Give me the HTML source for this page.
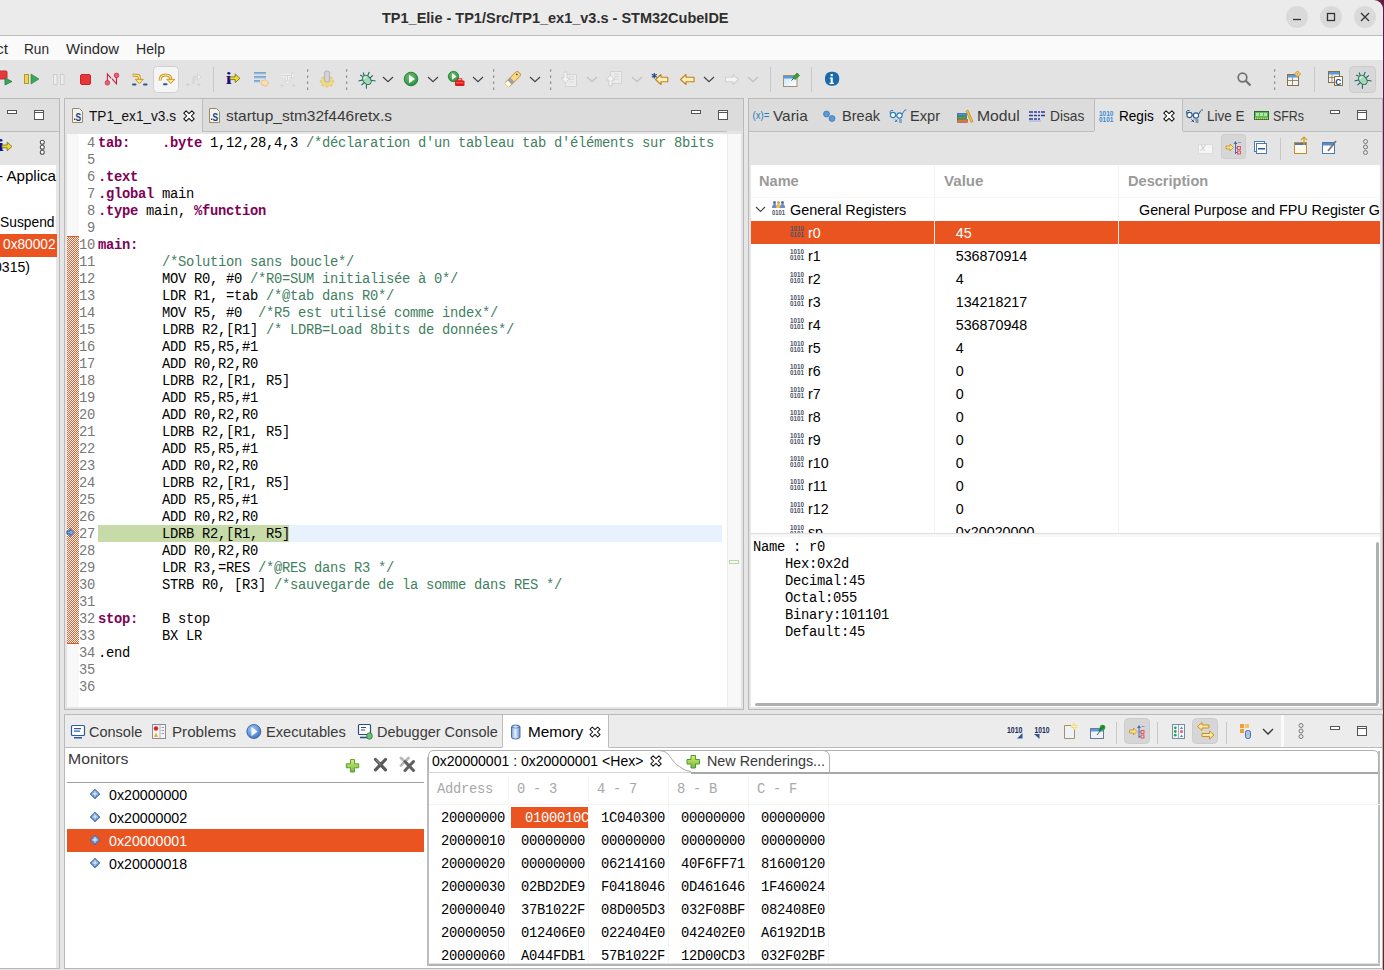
<!DOCTYPE html>
<html><head><meta charset="utf-8"><style>
*{box-sizing:border-box;margin:0;padding:0}
html,body{width:1384px;height:970px;overflow:hidden;background:#e6e6e6;font-family:"Liberation Sans",sans-serif;font-size:14px;color:#000}
.a{position:absolute}
.mono{font-family:"Liberation Mono",monospace}
.t{position:absolute;white-space:pre;line-height:1}
svg{position:absolute;overflow:visible}
</style></head><body>
<div class="a" style="left:0px;top:0px;width:1384px;height:35px;background:#ebebeb;"></div>
<div class="a" style="left:1366px;top:0px;width:18px;height:18px;background:#65203f;"></div>
<div class="a" style="left:1366px;top:0px;width:17px;height:18px;background:#ebebeb;border-top-right-radius:9px"></div>
<div class="a" style="left:0px;top:35px;width:1384px;height:1px;background:#bebebe;"></div>
<div class="t" style="left:382px;top:11px;font-size:14.5px;color:#2f2f2f;font-weight:bold;">TP1_Elie - TP1/Src/TP1_ex1_v3.s - STM32CubeIDE</div>
<div class="a" style="left:1286px;top:6px;width:22px;height:22px;border-radius:11px;background:#dadada"></div>
<div class="a" style="left:1320px;top:6px;width:22px;height:22px;border-radius:11px;background:#dadada"></div>
<div class="a" style="left:1354px;top:6px;width:22px;height:22px;border-radius:11px;background:#dadada"></div>
<svg style="left:0px;top:0px" width="1384" height="40" viewBox="0 0 1384 40"><line x1="1293" y1="19.5" x2="1301" y2="19.5" stroke="#333" stroke-width="1.3"/><rect x="1327.5" y="13.5" width="7" height="7" fill="none" stroke="#333" stroke-width="1.3"/><path d="M1361 13 L1369 21 M1369 13 L1361 21" stroke="#333" stroke-width="1.3"/></svg>
<div class="a" style="left:1383px;top:0px;width:1px;height:970px;background:#65203f;background:linear-gradient(#5e1a42,#6a2424)"></div>
<div class="a" style="left:0px;top:36px;width:1383px;height:24px;background:#fafafa;"></div>
<div class="t" style="left:-4px;top:42px;font-size:14px;color:#2a2a2a;font-weight:normal;transform:scaleX(1.1019);transform-origin:0 0;">ct</div>
<div class="t" style="left:24px;top:42px;font-size:14px;color:#2a2a2a;font-weight:normal;transform:scaleX(0.9738);transform-origin:0 0;">Run</div>
<div class="t" style="left:66px;top:42px;font-size:14px;color:#2a2a2a;font-weight:normal;transform:scaleX(1.0647);transform-origin:0 0;">Window</div>
<div class="t" style="left:136px;top:42px;font-size:14px;color:#2a2a2a;font-weight:normal;transform:scaleX(1.0076);transform-origin:0 0;">Help</div>
<div class="a" style="left:0px;top:60px;width:1383px;height:38px;background:#e3e3e3;"></div>
<svg style="left:0px;top:0px" width="1384" height="100" viewBox="0 0 1384 100"><rect x="153.5" y="66.5" width="25" height="26" rx="4" fill="#f5f5f5" stroke="#cfcfcf"/><rect x="1349.5" y="66.5" width="26" height="26" rx="4" fill="#d8d8d8" stroke="#cccccc"/><rect x="-3" y="71" width="10" height="8" rx="1" fill="#e8383d" stroke="#c02a30"/><path d="M5 78 L12 81.5 L5 85Z" fill="#3aa55a" stroke="#208040" stroke-width=".8"/><rect x="24.5" y="74.5" width="4" height="9" fill="#f0d060" stroke="#b89a20"/><path d="M31 74 L39 79 L31 84Z" fill="#3aa85a" stroke="#2a8040" stroke-width=".6"/><rect x="53.5" y="74.5" width="3.5" height="10" fill="#eee" stroke="#cfcfcf"/><rect x="60.5" y="74.5" width="3.5" height="10" fill="#eee" stroke="#cfcfcf"/><rect x="80.5" y="74.5" width="10" height="10" rx="1.5" fill="#e8363c" stroke="#c0282d"/><path d="M107.4 82 L107.4 74 L111.2 78.3 M112.3 78.6 L112.6 79.4 L116.5 83.8 L116.5 76" fill="none" stroke="#c82040" stroke-width="1.1"/><circle cx="107.4" cy="82.8" r="2.3" fill="#f06070" stroke="#c02040" stroke-width=".7"/><circle cx="116.5" cy="75.4" r="2.3" fill="#f06070" stroke="#c02040" stroke-width=".7"/><path d="M132.5 75.3 L137.5 75.3 Q139.3 75.3 139.3 77.5 L139.3 80" fill="none" stroke="#c8961e" stroke-width="3"/><path d="M132.5 75.3 L137.5 75.3 Q139.3 75.3 139.3 77.5 L139.3 80" fill="none" stroke="#fff0a8" stroke-width="1.1"/><path d="M135.3 79.3 L143.3 79.3 L139.3 83.5Z" fill="#fce890" stroke="#c8961e" stroke-width="1" stroke-linejoin="round"/><rect x="132" y="83.6" width="4.5" height="2" rx="1" fill="#2a5a8a"/><rect x="143" y="83.6" width="4.5" height="2" rx="1" fill="#2a5a8a"/><path d="M160 80.5 Q160 75 165.5 75 Q170.8 75 170.8 79.5" fill="none" stroke="#c8961e" stroke-width="3"/><path d="M160 80.5 Q160 75 165.5 75 Q170.8 75 170.8 79.5" fill="none" stroke="#fff0a8" stroke-width="1.1"/><path d="M166.8 79.3 L174.8 79.3 L170.8 83.5Z" fill="#fce890" stroke="#c8961e" stroke-width="1" stroke-linejoin="round"/><rect x="163" y="83.3" width="4.5" height="2" rx="1" fill="#2a5a8a"/><path d="M193.5 84 L193.5 79 Q193.5 77 195.5 77 L198 77" fill="none" stroke="#d8d8d8" stroke-width="2.4"/><path d="M197.5 73.5 L201 77 L197.5 80.5Z" fill="#f0f0f0" stroke="#d0d0d0" stroke-width=".8"/><rect x="186" y="83.8" width="3.5" height="1.6" rx=".8" fill="#cfcfcf"/><rect x="197" y="83.8" width="3.5" height="1.6" rx=".8" fill="#cfcfcf"/><rect x="213" y="67" width="1" height="25" fill="#c8c8c8"/><text x="225.8" y="84.2" font-family="Liberation Serif" font-weight="bold" font-size="16" textLength="6" lengthAdjust="spacingAndGlyphs" fill="#10108a">i</text><path d="M230.0 76.89999999999999 L235.2 76.89999999999999 L235.2 73.89999999999999 L239.9 78.3 L235.2 82.6 L235.2 79.6 L230.0 79.6Z" fill="#e8e030" stroke="#8a6a20" stroke-width=".9"/><defs><linearGradient id="gl" x1="0" y1="0" x2="0" y2="1"><stop offset="0" stop-color="#6a9ac8"/><stop offset="1" stop-color="#b0cce8"/></linearGradient></defs><rect x="254" y="72" width="12" height="2.6" fill="url(#gl)"/><rect x="254" y="76" width="12" height="2.6" fill="url(#gl)"/><rect x="254" y="80" width="6" height="2.6" fill="url(#gl)"/><path d="M261 81.5 Q262 79.5 264 80.5 L265.5 79.5 L268.5 83 L266 86.5 L264.5 85.5 Q262 86 261 83Z" fill="#f8e0b0" stroke="#e0b070" stroke-width=".7"/><path d="M281 75.5 L292 75.5 M287.5 75.5 L287.5 82" stroke="#f4f4f4" stroke-width="2.6"/><path d="M281 75.5 L292 75.5 M287.5 75.5 L287.5 82" stroke="#d4d4d4" stroke-width="1" stroke-dasharray="0"/><path d="M291.5 72.5 L295 75.5 L291.5 78.5Z" fill="#f4f4f4" stroke="#d0d0d0" stroke-width=".8"/><path d="M284.5 81 L287.5 84.5 L290.5 81Z" fill="#f4f4f4" stroke="#d0d0d0" stroke-width=".8"/><rect x="280" y="84.8" width="3.5" height="1.5" rx=".7" fill="#d0d0d0"/><rect x="292" y="84.8" width="3.5" height="1.5" rx=".7" fill="#d0d0d0"/><rect x="307" y="69.2" width="1.2" height="2.6" fill="#9a9080"/><rect x="307" y="75.4" width="1.2" height="2.6" fill="#9a9080"/><rect x="307" y="81.4" width="1.2" height="2.6" fill="#9a9080"/><rect x="307" y="87.4" width="1.2" height="2.6" fill="#9a9080"/><circle cx="332.50" cy="81.50" r="1.8" fill="#e8cc70"/><circle cx="330.89" cy="84.68" r="1.8" fill="#e8cc70"/><circle cx="327.00" cy="86.00" r="1.8" fill="#e8cc70"/><circle cx="323.11" cy="84.68" r="1.8" fill="#e8cc70"/><circle cx="321.50" cy="81.50" r="1.8" fill="#e8cc70"/><circle cx="323.11" cy="78.32" r="1.8" fill="#e8cc70"/><circle cx="327.00" cy="77.00" r="1.8" fill="#e8cc70"/><circle cx="330.89" cy="78.32" r="1.8" fill="#e8cc70"/><ellipse cx="327" cy="81.5" rx="5.5" ry="4.5" fill="#f0d888"/><rect x="324.5" y="71" width="5" height="11" rx="2" fill="#d4d4dc" stroke="#a0a0a8" stroke-width=".7"/><rect x="346" y="69.2" width="1.2" height="2.6" fill="#9a9080"/><rect x="346" y="75.4" width="1.2" height="2.6" fill="#9a9080"/><rect x="346" y="81.4" width="1.2" height="2.6" fill="#9a9080"/><rect x="346" y="87.4" width="1.2" height="2.6" fill="#9a9080"/><g transform="translate(366.5 79.5) rotate(-40)"><path d="M-3 -2 L-7 -4 M3 -2 L7 -4 M-3.5 1 L-7.5 1 M3.5 1 L7.5 1 M-3 3.5 L-6 7 M3 3.5 L6 7 M-1 -5 L-2 -7.5 M1 -5 L2 -7.5" stroke="#1e6a6a" stroke-width="1.1"/><ellipse cx="0" cy="0.5" rx="3.6" ry="5.2" fill="#a8d8b0" stroke="#2a6a60" stroke-width="1"/><path d="M-1.5 -2 Q0 -3 1.5 -2" stroke="#e8f8e8" stroke-width="1" fill="none"/></g><path d="M383 77 L388 81.7 L393 77" fill="none" stroke="#444" stroke-width="1.2"/><defs><radialGradient id="gg" cx=".45" cy=".4" r=".65"><stop offset="0" stop-color="#78c878"/><stop offset="1" stop-color="#1e8a3a"/></radialGradient></defs><circle cx="411" cy="79" r="6.8" fill="url(#gg)" stroke="#1a7030" stroke-width=".8"/><path d="M409 74.8 L415 79 L409 83.2Z" fill="#fff"/><path d="M428 77 L433 81.7 L438 77" fill="none" stroke="#444" stroke-width="1.2"/><circle cx="453.5" cy="76.5" r="5.2" fill="url(#gg)" stroke="#1a7030" stroke-width=".7"/><path d="M452 73.3 L456.5 76.5 L452 79.7Z" fill="#fff"/><rect x="455" y="80.5" width="9.5" height="5.5" rx="1" fill="#e01818"/><rect x="457.8" y="78.8" width="4" height="2" fill="none" stroke="#e01818" stroke-width=".9"/><path d="M456 82.8 L463.5 82.8" stroke="#ff9090" stroke-width=".7"/><path d="M473 77 L478 81.7 L483 77" fill="none" stroke="#444" stroke-width="1.2"/><rect x="493" y="69.2" width="1.2" height="2.6" fill="#9a9080"/><rect x="493" y="75.4" width="1.2" height="2.6" fill="#9a9080"/><rect x="493" y="81.4" width="1.2" height="2.6" fill="#9a9080"/><rect x="493" y="87.4" width="1.2" height="2.6" fill="#9a9080"/><g transform="translate(513 79) rotate(-45)"><rect x="-9" y="-3" width="18" height="6" rx="2.5" fill="#f8d880" stroke="#c08a30" stroke-width=".9"/><rect x="-5" y="-3" width="4" height="6" fill="#a0a0a8"/><path d="M-9 -2.5 L-5 -2.5 L-5 2.5 L-9 2.5Z" fill="#fffbe8"/><circle cx="6" cy="-0.5" r=".9" fill="#3a5a9a"/></g><path d="M530 77 L535 81.7 L540 77" fill="none" stroke="#444" stroke-width="1.2"/><rect x="550" y="69.2" width="1.2" height="2.6" fill="#9a9080"/><rect x="550" y="75.4" width="1.2" height="2.6" fill="#9a9080"/><rect x="550" y="81.4" width="1.2" height="2.6" fill="#9a9080"/><rect x="550" y="87.4" width="1.2" height="2.6" fill="#9a9080"/><rect x="565.5" y="74.5" width="11" height="12" fill="#ececec" stroke="#d4d4d4"/><path d="M569 77 L574 77 M569 79.5 L574 79.5 M569 82 L574 82" stroke="#d8d8d8"/><path d="M564 72 L567 72 L567 78 L570 78 L565.5 83 L561 78 L564 78Z" fill="#f4f4f4" stroke="#d0d0d0"/><path d="M587 77 L592 81.7 L597 77" fill="none" stroke="#c0c0c0" stroke-width="1.2"/><rect x="610.5" y="71.5" width="11" height="12" fill="#ececec" stroke="#d4d4d4"/><path d="M614 74 L619 74 M614 76.5 L619 76.5 M614 79 L619 79" stroke="#d8d8d8"/><path d="M609 86 L612 86 L612 80 L615 80 L610.5 75 L606 80 L609 80Z" fill="#f4f4f4" stroke="#d0d0d0"/><path d="M632 77 L637 81.7 L642 77" fill="none" stroke="#c0c0c0" stroke-width="1.2"/><path d="M654.3 73 L654.3 78.5 M651.8 74.3 L656.8 77.2 M656.8 74.3 L651.8 77.2" stroke="#2a4a8a" stroke-width="1.2"/><path d="M655.5 79.5 L661 74.5 L661 77.3 L667.8 77.3 L667.8 81.7 L661 81.7 L661 84.5Z" fill="#fff0b8" stroke="#c08020" stroke-width="1.1" stroke-linejoin="round"/><path d="M680.5 79.5 L686 74.5 L686 77.3 L694 77.3 L694 81.7 L686 81.7 L686 84.5Z" fill="#fff0b8" stroke="#c08020" stroke-width="1.1" stroke-linejoin="round"/><path d="M704 77 L709 81.7 L714 77" fill="none" stroke="#444" stroke-width="1.2"/><path d="M738.5 79.5 L733 74.5 L733 77.3 L725.5 77.3 L725.5 81.7 L733 81.7 L733 84.5Z" fill="#f4f4f4" stroke="#d0d0d0" stroke-width="1.1" stroke-linejoin="round"/><path d="M748 77 L753 81.7 L758 77" fill="none" stroke="#c0c0c0" stroke-width="1.2"/><rect x="770" y="67" width="1" height="25" fill="#c8c8c8"/><defs><linearGradient id="gw" x1="0" y1="0" x2="1" y2="1"><stop offset="0" stop-color="#c8e4f8"/><stop offset="1" stop-color="#ffffff"/></linearGradient></defs><rect x="783.5" y="75.5" width="13.5" height="11" fill="url(#gw)" stroke="#a09070"/><rect x="784" y="76" width="12.5" height="2.5" fill="#5a9ad8"/><path d="M791.5 80.5 L794 78" stroke="#333" stroke-width=".9"/><path d="M793 77.5 L797 73 L799.5 75.5 L795 79.5Z" fill="#40a040" stroke="#208020" stroke-width=".8"/><rect x="811" y="67" width="1" height="25" fill="#c8c8c8"/><rect x="825" y="71.8" width="14.2" height="14" rx="6" fill="#1a6aaa"/><rect x="830.6" y="74" width="2.2" height="2.2" fill="#fff"/><path d="M829.8 77.5 L832.8 77.5 L832.8 82.8 L834 82.8 L834 84 L829.5 84 L829.5 82.8 L830.7 82.8 L830.7 78.7 L829.8 78.7Z" fill="#fff"/><circle cx="1242.5" cy="77.5" r="4.3" fill="none" stroke="#707070" stroke-width="1.7"/><path d="M1245.5 80.5 L1250.5 85.5" stroke="#707070" stroke-width="2.2"/><rect x="1274" y="69.2" width="1.2" height="2.6" fill="#9a9080"/><rect x="1274" y="75.4" width="1.2" height="2.6" fill="#9a9080"/><rect x="1274" y="81.4" width="1.2" height="2.6" fill="#9a9080"/><rect x="1274" y="87.4" width="1.2" height="2.6" fill="#9a9080"/><rect x="1287.5" y="74.5" width="11" height="11" fill="#eef4fc" stroke="#8a7040"/><rect x="1288" y="75" width="10" height="2.5" fill="#5a9ae0"/><path d="M1288 80.5 L1298 80.5 M1292.5 77.5 L1292.5 85" stroke="#8a7040" stroke-width=".8"/><path d="M1297.5 71 L1300.5 74 L1297.5 77 L1294.5 74Z" fill="#fce8a0" stroke="#c09030" stroke-width="1"/><path d="M1297.5 72.5 L1297.5 75.5 M1296 74 L1299 74" stroke="#e0a020" stroke-width=".8"/><rect x="1314" y="67" width="1" height="25" fill="#c8c8c8"/><rect x="1328.5" y="71.5" width="11" height="11" fill="#eef4fc" stroke="#8a7040"/><rect x="1329" y="72" width="10" height="2.5" fill="#5a9ae0"/><path d="M1329 77.5 L1334 77.5 M1332 74.5 L1332 82" stroke="#8a7040" stroke-width=".8"/><rect x="1334.5" y="76.5" width="8" height="9" fill="#fff" stroke="#8a7040"/><text x="1335.3" y="84.5" font-size="8.5" font-weight="bold" textLength="6" lengthAdjust="spacingAndGlyphs" fill="#1a3a7a">C</text><g transform="translate(1362.5 79.5) rotate(-40)"><path d="M-3 -2 L-7 -4 M3 -2 L7 -4 M-3.5 1 L-7.5 1 M3.5 1 L7.5 1 M-3 3.5 L-6 7 M3 3.5 L6 7 M-1 -5 L-2 -7.5 M1 -5 L2 -7.5" stroke="#1e6a6a" stroke-width="1.1"/><ellipse cx="0" cy="0.5" rx="3.6" ry="5.2" fill="#a8d8b0" stroke="#2a6a60" stroke-width="1"/><path d="M-1.5 -2 Q0 -3 1.5 -2" stroke="#e8f8e8" stroke-width="1" fill="none"/></g></svg>
<div class="a" style="left:0px;top:98px;width:1383px;height:872px;background:#e6e6e6;"></div>
<div class="a" style="left:0px;top:98px;width:60px;height:1px;background:#b9b9b9;"></div>
<div class="a" style="left:59px;top:98px;width:1px;height:871px;background:#b9b9b9;"></div>
<div class="a" style="left:0px;top:99px;width:59px;height:32px;background:#dfdfdf;"></div>
<div class="a" style="left:0px;top:131px;width:59px;height:1px;background:#bdbdbd;"></div>
<div class="a" style="left:0px;top:132px;width:59px;height:33px;background:#e4e4e4;"></div>
<div class="a" style="left:0px;top:165px;width:56px;height:804px;background:#ffffff;"></div>
<div class="a" style="left:0px;top:968px;width:60px;height:1px;background:#b9b9b9;"></div>
<svg style="left:0px;top:0px" width="60" height="200" viewBox="0 0 60 200"><rect x="7.5" y="110.5" width="9" height="3" fill="#fff" stroke="#555" stroke-width="1"/><rect x="34.5" y="110.5" width="9" height="9" fill="#fff" stroke="#555" stroke-width="1"/><rect x="35" y="112" width="8" height="1" fill="#555"/><text x="-2.2" y="151.2" font-family="Liberation Serif" font-weight="bold" font-size="16" textLength="6" lengthAdjust="spacingAndGlyphs" fill="#10108a">i</text><path d="M2.0 145.1 L7.199999999999999 145.1 L7.199999999999999 142.1 L11.9 146.5 L7.199999999999999 150.8 L7.199999999999999 147.8 L2.0 147.8Z" fill="#e8e030" stroke="#8a6a20" stroke-width=".9"/><circle cx="42.3" cy="142.3" r="2" fill="#fff" stroke="#555" stroke-width="1.1"/><circle cx="42.3" cy="147.3" r="2" fill="#fff" stroke="#555" stroke-width="1.1"/><circle cx="42.3" cy="152.3" r="2" fill="#fff" stroke="#555" stroke-width="1.1"/></svg>
<div class="t" style="left:-2px;top:169.43px;font-size:14.5px;color:#000;font-weight:normal;transform:scaleX(1.0430);transform-origin:0 0;">- Applica</div>
<div class="t" style="left:0px;top:214.53px;font-size:14.5px;color:#000;font-weight:normal;transform:scaleX(0.9522);transform-origin:0 0;">Suspend</div>
<div class="a" style="left:0px;top:234px;width:57px;height:23px;background:#e95420;"></div>
<div class="t" style="left:3px;top:237.43px;font-size:14.5px;color:#fff;font-weight:normal;transform:scaleX(0.9456);transform-origin:0 0;">0x80002</div>
<div class="t" style="left:-6.5px;top:260.33px;font-size:14.5px;color:#000;font-weight:normal;transform:scaleX(0.9709);transform-origin:0 0;">0315)</div>
<div class="a" style="left:64px;top:98px;width:680px;height:1px;background:#b9b9b9;"></div>
<div class="a" style="left:64px;top:98px;width:1px;height:612px;background:#b9b9b9;"></div>
<div class="a" style="left:743px;top:98px;width:1px;height:612px;background:#b9b9b9;"></div>
<div class="a" style="left:64px;top:709px;width:680px;height:1px;background:#b9b9b9;"></div>
<div class="a" style="left:65px;top:99px;width:678px;height:32px;background:#dcdcdc;"></div>
<div class="a" style="left:65px;top:99px;width:137px;height:35px;background:#e4e4e4;"></div>
<div class="a" style="left:202px;top:99px;width:1px;height:32px;background:#bdbdbd;"></div>
<div class="a" style="left:202px;top:131px;width:541px;height:1px;background:#bdbdbd;"></div>
<div class="a" style="left:65px;top:131px;width:2px;height:578px;background:#e4e4e4;"></div>
<div class="a" style="left:727px;top:131px;width:16px;height:578px;background:#e4e4e4;"></div>
<div class="a" style="left:65px;top:707px;width:678px;height:2px;background:#e4e4e4;"></div>
<svg style="left:0px;top:0px" width="760" height="140" viewBox="0 0 760 140"><path d="M72.5 108.5 L79.5 108.5 L82.5 111.5 L82.5 122.5 L72.5 122.5Z" fill="#eef2fa" stroke="#a08a50" stroke-width="1"/><rect x="74" y="118.5" width="1.3" height="1.5" fill="#1e3f70"/><text x="75.5" y="120.5" font-size="10.5" font-weight="bold" textLength="5.6" lengthAdjust="spacingAndGlyphs" fill="#1e3f70">S</text><path d="M209.5 108.5 L216.5 108.5 L219.5 111.5 L219.5 122.5 L209.5 122.5Z" fill="#eef2fa" stroke="#a08a50" stroke-width="1"/><rect x="211" y="118.5" width="1.3" height="1.5" fill="#1e3f70"/><text x="212.5" y="120.5" font-size="10.5" font-weight="bold" textLength="5.6" lengthAdjust="spacingAndGlyphs" fill="#1e3f70">S</text><path d="M183.80 113.10 L186.10 110.80 L189.00 113.70 L191.90 110.80 L194.20 113.10 L191.30 116.00 L194.20 118.90 L191.90 121.20 L189.00 118.30 L186.10 121.20 L183.80 118.90 L186.70 116.00Z" fill="#fff" stroke="#111" stroke-width="1.05" stroke-linejoin="round"/><rect x="691.5" y="110.5" width="9" height="3" fill="#fff" stroke="#555" stroke-width="1"/><rect x="718.5" y="110.5" width="9" height="9" fill="#fff" stroke="#555" stroke-width="1"/><rect x="719" y="112" width="8" height="1" fill="#555"/></svg>
<div class="t" style="left:89px;top:108.73px;font-size:14.5px;color:#101010;font-weight:normal;transform:scaleX(0.9386);transform-origin:0 0;">TP1_ex1_v3.s</div>
<div class="t" style="left:226px;top:108.73px;font-size:14.5px;color:#3a3a3a;font-weight:normal;transform:scaleX(1.0672);transform-origin:0 0;">startup_stm32f446retx.s</div>
<div class="a" style="left:67px;top:134px;width:660px;height:573px;background:#ffffff;"></div>
<div class="a" style="left:67px;top:134px;width:12px;height:573px;background:#f8f8f8;"></div>
<div class="a" style="left:727px;top:134px;width:14px;height:573px;background:#f8f8f8;"></div>
<div class="a" style="left:727px;top:134px;width:1px;height:573px;background:#ececec;"></div>
<div class="a" style="left:67px;top:236px;width:12px;height:408px;background:repeating-conic-gradient(#ec5a28 0 25%,#ffffff 0 50%) 1px 0/2px 2px"></div>
<div class="a" style="left:67px;top:236px;width:12px;height:1px;background:#e95420;"></div>
<div class="a" style="left:67px;top:643px;width:12px;height:1px;background:#e95420;"></div>
<div class="a" style="left:98px;top:525px;width:624px;height:17px;background:#e8f2fe;"></div>
<div class="a" style="left:98px;top:525px;width:191px;height:17px;background:#c7dba8;"></div>
<svg style="left:0px;top:0px" width="100" height="560" viewBox="0 0 100 560"><path d="M67 531 L70 531 L70 528.5 L74 532.5 L70 536.5 L70 534 L67 534Z" fill="#7aaad8" stroke="#1a5aa0" stroke-width="1"/></svg>
<div class="a" style="left:729px;top:560px;width:10px;height:4px;background:transparent;border:1px solid #b8d8a0"></div>
<div class="t mono" style="left:79px;top:134.8px;width:16px;height:17px;line-height:17px;font-size:13.8px;letter-spacing:-0.28px;color:#787878;text-align:right">4</div>
<div class="t mono" style="left:98px;top:134.6px;height:17px;line-height:17px;font-size:13.8px;letter-spacing:-0.28px;color:#000"><span style="color:#7f0055;font-weight:bold">tab:</span>    <span style="color:#7f0055;font-weight:bold">.byte</span> 1,12,28,4,3 <span style="color:#3f7f5f;font-weight:normal">/*déclaration d'un tableau tab d'éléments sur 8bits</span></div>
<div class="t mono" style="left:79px;top:151.8px;width:16px;height:17px;line-height:17px;font-size:13.8px;letter-spacing:-0.28px;color:#787878;text-align:right">5</div>
<div class="t mono" style="left:79px;top:168.8px;width:16px;height:17px;line-height:17px;font-size:13.8px;letter-spacing:-0.28px;color:#787878;text-align:right">6</div>
<div class="t mono" style="left:98px;top:168.6px;height:17px;line-height:17px;font-size:13.8px;letter-spacing:-0.28px;color:#000"><span style="color:#7f0055;font-weight:bold">.text</span></div>
<div class="t mono" style="left:79px;top:185.8px;width:16px;height:17px;line-height:17px;font-size:13.8px;letter-spacing:-0.28px;color:#787878;text-align:right">7</div>
<div class="t mono" style="left:98px;top:185.6px;height:17px;line-height:17px;font-size:13.8px;letter-spacing:-0.28px;color:#000"><span style="color:#7f0055;font-weight:bold">.global</span> main</div>
<div class="t mono" style="left:79px;top:202.8px;width:16px;height:17px;line-height:17px;font-size:13.8px;letter-spacing:-0.28px;color:#787878;text-align:right">8</div>
<div class="t mono" style="left:98px;top:202.6px;height:17px;line-height:17px;font-size:13.8px;letter-spacing:-0.28px;color:#000"><span style="color:#7f0055;font-weight:bold">.type</span> main, <span style="color:#7f0055;font-weight:bold">%function</span></div>
<div class="t mono" style="left:79px;top:219.8px;width:16px;height:17px;line-height:17px;font-size:13.8px;letter-spacing:-0.28px;color:#787878;text-align:right">9</div>
<div class="t mono" style="left:79px;top:236.8px;width:16px;height:17px;line-height:17px;font-size:13.8px;letter-spacing:-0.28px;color:#787878;text-align:right">10</div>
<div class="t mono" style="left:98px;top:236.6px;height:17px;line-height:17px;font-size:13.8px;letter-spacing:-0.28px;color:#000"><span style="color:#7f0055;font-weight:bold">main:</span></div>
<div class="t mono" style="left:79px;top:253.8px;width:16px;height:17px;line-height:17px;font-size:13.8px;letter-spacing:-0.28px;color:#787878;text-align:right">11</div>
<div class="t mono" style="left:98px;top:253.6px;height:17px;line-height:17px;font-size:13.8px;letter-spacing:-0.28px;color:#000">        <span style="color:#3f7f5f;font-weight:normal">/*Solution sans boucle*/</span></div>
<div class="t mono" style="left:79px;top:270.8px;width:16px;height:17px;line-height:17px;font-size:13.8px;letter-spacing:-0.28px;color:#787878;text-align:right">12</div>
<div class="t mono" style="left:98px;top:270.6px;height:17px;line-height:17px;font-size:13.8px;letter-spacing:-0.28px;color:#000">        MOV R0, #0 <span style="color:#3f7f5f;font-weight:normal">/*R0=SUM initialisée à 0*/</span></div>
<div class="t mono" style="left:79px;top:287.8px;width:16px;height:17px;line-height:17px;font-size:13.8px;letter-spacing:-0.28px;color:#787878;text-align:right">13</div>
<div class="t mono" style="left:98px;top:287.6px;height:17px;line-height:17px;font-size:13.8px;letter-spacing:-0.28px;color:#000">        LDR R1, =tab <span style="color:#3f7f5f;font-weight:normal">/*@tab dans R0*/</span></div>
<div class="t mono" style="left:79px;top:304.8px;width:16px;height:17px;line-height:17px;font-size:13.8px;letter-spacing:-0.28px;color:#787878;text-align:right">14</div>
<div class="t mono" style="left:98px;top:304.6px;height:17px;line-height:17px;font-size:13.8px;letter-spacing:-0.28px;color:#000">        MOV R5, #0  <span style="color:#3f7f5f;font-weight:normal">/*R5 est utilisé comme index*/</span></div>
<div class="t mono" style="left:79px;top:321.8px;width:16px;height:17px;line-height:17px;font-size:13.8px;letter-spacing:-0.28px;color:#787878;text-align:right">15</div>
<div class="t mono" style="left:98px;top:321.6px;height:17px;line-height:17px;font-size:13.8px;letter-spacing:-0.28px;color:#000">        LDRB R2,[R1] <span style="color:#3f7f5f;font-weight:normal">/* LDRB=Load 8bits de données*/</span></div>
<div class="t mono" style="left:79px;top:338.8px;width:16px;height:17px;line-height:17px;font-size:13.8px;letter-spacing:-0.28px;color:#787878;text-align:right">16</div>
<div class="t mono" style="left:98px;top:338.6px;height:17px;line-height:17px;font-size:13.8px;letter-spacing:-0.28px;color:#000">        ADD R5,R5,#1</div>
<div class="t mono" style="left:79px;top:355.8px;width:16px;height:17px;line-height:17px;font-size:13.8px;letter-spacing:-0.28px;color:#787878;text-align:right">17</div>
<div class="t mono" style="left:98px;top:355.6px;height:17px;line-height:17px;font-size:13.8px;letter-spacing:-0.28px;color:#000">        ADD R0,R2,R0</div>
<div class="t mono" style="left:79px;top:372.8px;width:16px;height:17px;line-height:17px;font-size:13.8px;letter-spacing:-0.28px;color:#787878;text-align:right">18</div>
<div class="t mono" style="left:98px;top:372.6px;height:17px;line-height:17px;font-size:13.8px;letter-spacing:-0.28px;color:#000">        LDRB R2,[R1, R5]</div>
<div class="t mono" style="left:79px;top:389.8px;width:16px;height:17px;line-height:17px;font-size:13.8px;letter-spacing:-0.28px;color:#787878;text-align:right">19</div>
<div class="t mono" style="left:98px;top:389.6px;height:17px;line-height:17px;font-size:13.8px;letter-spacing:-0.28px;color:#000">        ADD R5,R5,#1</div>
<div class="t mono" style="left:79px;top:406.8px;width:16px;height:17px;line-height:17px;font-size:13.8px;letter-spacing:-0.28px;color:#787878;text-align:right">20</div>
<div class="t mono" style="left:98px;top:406.6px;height:17px;line-height:17px;font-size:13.8px;letter-spacing:-0.28px;color:#000">        ADD R0,R2,R0</div>
<div class="t mono" style="left:79px;top:423.8px;width:16px;height:17px;line-height:17px;font-size:13.8px;letter-spacing:-0.28px;color:#787878;text-align:right">21</div>
<div class="t mono" style="left:98px;top:423.6px;height:17px;line-height:17px;font-size:13.8px;letter-spacing:-0.28px;color:#000">        LDRB R2,[R1, R5]</div>
<div class="t mono" style="left:79px;top:440.8px;width:16px;height:17px;line-height:17px;font-size:13.8px;letter-spacing:-0.28px;color:#787878;text-align:right">22</div>
<div class="t mono" style="left:98px;top:440.6px;height:17px;line-height:17px;font-size:13.8px;letter-spacing:-0.28px;color:#000">        ADD R5,R5,#1</div>
<div class="t mono" style="left:79px;top:457.8px;width:16px;height:17px;line-height:17px;font-size:13.8px;letter-spacing:-0.28px;color:#787878;text-align:right">23</div>
<div class="t mono" style="left:98px;top:457.6px;height:17px;line-height:17px;font-size:13.8px;letter-spacing:-0.28px;color:#000">        ADD R0,R2,R0</div>
<div class="t mono" style="left:79px;top:474.8px;width:16px;height:17px;line-height:17px;font-size:13.8px;letter-spacing:-0.28px;color:#787878;text-align:right">24</div>
<div class="t mono" style="left:98px;top:474.6px;height:17px;line-height:17px;font-size:13.8px;letter-spacing:-0.28px;color:#000">        LDRB R2,[R1, R5]</div>
<div class="t mono" style="left:79px;top:491.8px;width:16px;height:17px;line-height:17px;font-size:13.8px;letter-spacing:-0.28px;color:#787878;text-align:right">25</div>
<div class="t mono" style="left:98px;top:491.6px;height:17px;line-height:17px;font-size:13.8px;letter-spacing:-0.28px;color:#000">        ADD R5,R5,#1</div>
<div class="t mono" style="left:79px;top:508.8px;width:16px;height:17px;line-height:17px;font-size:13.8px;letter-spacing:-0.28px;color:#787878;text-align:right">26</div>
<div class="t mono" style="left:98px;top:508.6px;height:17px;line-height:17px;font-size:13.8px;letter-spacing:-0.28px;color:#000">        ADD R0,R2,R0</div>
<div class="t mono" style="left:79px;top:525.8px;width:16px;height:17px;line-height:17px;font-size:13.8px;letter-spacing:-0.28px;color:#787878;text-align:right">27</div>
<div class="t mono" style="left:98px;top:525.6px;height:17px;line-height:17px;font-size:13.8px;letter-spacing:-0.28px;color:#000">        LDRB R2,[R1, R5]</div>
<div class="t mono" style="left:79px;top:542.8px;width:16px;height:17px;line-height:17px;font-size:13.8px;letter-spacing:-0.28px;color:#787878;text-align:right">28</div>
<div class="t mono" style="left:98px;top:542.6px;height:17px;line-height:17px;font-size:13.8px;letter-spacing:-0.28px;color:#000">        ADD R0,R2,R0</div>
<div class="t mono" style="left:79px;top:559.8px;width:16px;height:17px;line-height:17px;font-size:13.8px;letter-spacing:-0.28px;color:#787878;text-align:right">29</div>
<div class="t mono" style="left:98px;top:559.6px;height:17px;line-height:17px;font-size:13.8px;letter-spacing:-0.28px;color:#000">        LDR R3,=RES <span style="color:#3f7f5f;font-weight:normal">/*@RES dans R3 */</span></div>
<div class="t mono" style="left:79px;top:576.8px;width:16px;height:17px;line-height:17px;font-size:13.8px;letter-spacing:-0.28px;color:#787878;text-align:right">30</div>
<div class="t mono" style="left:98px;top:576.6px;height:17px;line-height:17px;font-size:13.8px;letter-spacing:-0.28px;color:#000">        STRB R0, [R3] <span style="color:#3f7f5f;font-weight:normal">/*sauvegarde de la somme dans RES */</span></div>
<div class="t mono" style="left:79px;top:593.8px;width:16px;height:17px;line-height:17px;font-size:13.8px;letter-spacing:-0.28px;color:#787878;text-align:right">31</div>
<div class="t mono" style="left:79px;top:610.8px;width:16px;height:17px;line-height:17px;font-size:13.8px;letter-spacing:-0.28px;color:#787878;text-align:right">32</div>
<div class="t mono" style="left:98px;top:610.6px;height:17px;line-height:17px;font-size:13.8px;letter-spacing:-0.28px;color:#000"><span style="color:#7f0055;font-weight:bold">stop:</span>   B stop</div>
<div class="t mono" style="left:79px;top:627.8px;width:16px;height:17px;line-height:17px;font-size:13.8px;letter-spacing:-0.28px;color:#787878;text-align:right">33</div>
<div class="t mono" style="left:98px;top:627.6px;height:17px;line-height:17px;font-size:13.8px;letter-spacing:-0.28px;color:#000">        BX LR</div>
<div class="t mono" style="left:79px;top:644.8px;width:16px;height:17px;line-height:17px;font-size:13.8px;letter-spacing:-0.28px;color:#787878;text-align:right">34</div>
<div class="t mono" style="left:98px;top:644.6px;height:17px;line-height:17px;font-size:13.8px;letter-spacing:-0.28px;color:#000">.end</div>
<div class="t mono" style="left:79px;top:661.8px;width:16px;height:17px;line-height:17px;font-size:13.8px;letter-spacing:-0.28px;color:#787878;text-align:right">35</div>
<div class="t mono" style="left:79px;top:678.8px;width:16px;height:17px;line-height:17px;font-size:13.8px;letter-spacing:-0.28px;color:#787878;text-align:right">36</div>
<div class="a" style="left:748px;top:98px;width:635px;height:1px;background:#b9b9b9;"></div>
<div class="a" style="left:748px;top:98px;width:1px;height:612px;background:#b9b9b9;"></div>
<div class="a" style="left:1382px;top:98px;width:1px;height:612px;background:#b9b9b9;"></div>
<div class="a" style="left:748px;top:709px;width:635px;height:1px;background:#b9b9b9;"></div>
<div class="a" style="left:749px;top:99px;width:633px;height:32px;background:#dcdcdc;"></div>
<div class="a" style="left:1094px;top:99px;width:89px;height:33px;background:#e4e4e4;"></div>
<div class="a" style="left:1094px;top:99px;width:1px;height:32px;background:#bdbdbd;"></div>
<div class="a" style="left:1182px;top:99px;width:1px;height:32px;background:#bdbdbd;"></div>
<div class="a" style="left:749px;top:131px;width:345px;height:1px;background:#bdbdbd;"></div>
<div class="a" style="left:1183px;top:131px;width:199px;height:1px;background:#bdbdbd;"></div>
<div class="a" style="left:749px;top:132px;width:633px;height:33px;background:#e4e4e4;"></div>
<div class="a" style="left:751px;top:165px;width:629px;height:372px;background:#ffffff;"></div>
<div class="a" style="left:751px;top:197px;width:629px;height:1px;background:#f6f6f6;"></div>
<div class="a" style="left:934px;top:165px;width:1px;height:372px;background:#f2f2f2;"></div>
<div class="a" style="left:1118px;top:165px;width:1px;height:372px;background:#f2f2f2;"></div>
<div class="a" style="left:751px;top:536px;width:629px;height:1px;background:#d8d8d8;"></div>
<div class="a" style="left:751px;top:537px;width:629px;height:170px;background:#ffffff;"></div>
<div class="a" style="left:749px;top:165px;width:2px;height:544px;background:#e4e4e4;"></div>
<div class="a" style="left:751px;top:707px;width:629px;height:2px;background:#e4e4e4;"></div>
<div class="a" style="left:1380px;top:165px;width:2px;height:544px;background:#e4e4e4;"></div>
<svg style="left:0px;top:0px" width="1384" height="240" viewBox="0 0 1384 240"><text x="752.5" y="119" font-size="10" textLength="16.8" lengthAdjust="spacingAndGlyphs" fill="#2a7ac0">(x)=</text><circle cx="826.5" cy="114" r="3" fill="#5a9ad8" stroke="#2a6aa8" stroke-width=".6"/><circle cx="832" cy="118.5" r="3" fill="#5a9ad8" stroke="#2a6aa8" stroke-width=".6"/><circle cx="893" cy="115" r="2.6" fill="#fff" stroke="#2a7ac0" stroke-width="1.1"/><circle cx="899.5" cy="115.5" r="2.6" fill="#fff" stroke="#2a7ac0" stroke-width="1.1"/><path d="M890.5 114 L890 111.5 Q891 110 893 110.5 M895.6 115 L896.9 115.3 M902 114.5 L904 111 Q905 109.5 906.5 110" stroke="#2a7ac0" stroke-width="1" fill="none"/><path d="M895 119.5 L897.5 122 M897.5 119.5 L895 122 M899 120 L902 120 M899 122 L902 122" stroke="#2a6ab0" stroke-width=".9"/><rect x="957.5" y="113.5" width="9" height="2.5" fill="#4a90c8" stroke="#2a5a90" stroke-width=".6"/><rect x="957.5" y="116.5" width="9" height="2.5" fill="#50a860" stroke="#2a6a3a" stroke-width=".6"/><rect x="957.5" y="119.5" width="10" height="2.8" fill="#d87a40" stroke="#905030" stroke-width=".6"/><path d="M966 111 L968 110 L973 121.5 L971 122.5Z" fill="#f0c040" stroke="#b08020" stroke-width=".6"/><path d="M1029 112 L1045 112 M1029 115.5 L1045 115.5 M1029 119 L1041 119" stroke="#2a3aa0" stroke-width="1.6" stroke-dasharray="4 1 3 1 2 1"/><path d="M1029 121 L1041 121" stroke="#8aa0e0" stroke-width=".8"/><text x="1099" y="115.5" font-size="7.8" font-weight="bold" textLength="14.5" lengthAdjust="spacingAndGlyphs" fill="#3a8ad0">1010</text><text x="1099" y="121.5" font-size="7.8" font-weight="bold" textLength="14.5" lengthAdjust="spacingAndGlyphs" fill="#3a8ad0">0101</text><path d="M1163.80 113.10 L1166.10 110.80 L1169.00 113.70 L1171.90 110.80 L1174.20 113.10 L1171.30 116.00 L1174.20 118.90 L1171.90 121.20 L1169.00 118.30 L1166.10 121.20 L1163.80 118.90 L1166.70 116.00Z" fill="#fff" stroke="#111" stroke-width="1.05" stroke-linejoin="round"/><circle cx="1189.5" cy="115" r="2.6" fill="#fff" stroke="#2a5a90" stroke-width="1.1"/><circle cx="1196" cy="115.5" r="2.6" fill="#fff" stroke="#2a5a90" stroke-width="1.1"/><path d="M1187 114 L1186.5 111.5 Q1187.5 110 1189.5 110.5 M1192.1 115 L1193.4 115.3 M1198.5 114.5 L1200.5 111 Q1201.5 109.5 1203 110" stroke="#2a5a90" stroke-width="1" fill="none"/><path d="M1191.5 119.5 L1194 122 M1194 119.5 L1191.5 122 M1195.5 120 L1198.5 120 M1195.5 122 L1198.5 122" stroke="#1a3a70" stroke-width=".9"/><rect x="1254.5" y="111.5" width="14" height="8" fill="#60b860" stroke="#2a6a2a"/><rect x="1256" y="113" width="3" height="3" fill="#b0e8a0"/><rect x="1260" y="113" width="3" height="3" fill="#b0e8a0"/><rect x="1264" y="113" width="3" height="3" fill="#b0e8a0"/><path d="M1255 118.5 L1268 118.5" stroke="#e8d060" stroke-width="1.5" stroke-dasharray="1 1"/><rect x="1330.5" y="110.5" width="9" height="3" fill="#fff" stroke="#555" stroke-width="1"/><rect x="1357.5" y="110.5" width="9" height="9" fill="#fff" stroke="#555" stroke-width="1"/><rect x="1358" y="112" width="8" height="1" fill="#555"/><rect x="1198.5" y="144.5" width="14" height="9" fill="#f6f6f6" stroke="#dcdcdc"/><text x="1200" y="151" font-size="11" fill="#ccc" font-style="italic">x</text><rect x="1221.5" y="134.5" width="24" height="24" rx="3" fill="#d6d6d6" stroke="#cccccc"/><path d="M1226 146 L1230 146 L1230 144 L1233.5 147.5 L1230 151 L1230 149 L1226 149Z" fill="#f8e080" stroke="#c09030" stroke-width=".8"/><path d="M1235.5 143 L1235.5 154 M1235.5 148 L1237 148 M1235.5 152.5 L1237 152.5" stroke="#4a6ab0" stroke-width="1"/><path d="M1233.5 144 L1235.5 141 L1237.5 144Z" fill="#4a6ab0"/><rect x="1237.5" y="146.5" width="3" height="3" fill="#f8c0c8" stroke="#d04050" stroke-width=".8"/><rect x="1237.5" y="151" width="3" height="3" fill="#f8c0c8" stroke="#d04050" stroke-width=".8"/><path d="M1238 142.5 L1241 142.5" stroke="#6a8ac0" stroke-width=".8"/><rect x="1254.5" y="141.5" width="10" height="10" fill="#fff" stroke="#4a7ab0"/><rect x="1256.5" y="143.5" width="10" height="10" fill="#fff" stroke="#4a7ab0"/><rect x="1258" y="148" width="7" height="1.5" fill="#2a5a9a"/><rect x="1280" y="138" width="1" height="22" fill="#c8c8c8"/><rect x="1294.5" y="142.5" width="12" height="11" fill="#fff8e8" stroke="#b89040"/><rect x="1295" y="143" width="11" height="2" fill="#4a7ab0"/><path d="M1304 137 L1304 145 M1301 140 L1304 137 L1307 140" stroke="#d8a020" stroke-width="1.2" fill="none"/><rect x="1322.5" y="142.5" width="12" height="11" fill="#fff" stroke="#4a7ab0"/><rect x="1323" y="143" width="11" height="2.5" fill="#5a8ac8"/><path d="M1328 151 L1336 141" stroke="#777" stroke-width="1.8"/><circle cx="1365.5" cy="141.5" r="2" fill="none" stroke="#777"/><circle cx="1365.5" cy="147" r="2" fill="none" stroke="#777"/><circle cx="1365.5" cy="152.5" r="2" fill="none" stroke="#777"/><path d="M756 207 L760.5 211.5 L765 207" fill="none" stroke="#444" stroke-width="1.1"/><circle cx="774.5" cy="202.5" r="1.5" fill="#4a6ab0"/><circle cx="778.5" cy="202.5" r="1.5" fill="#d8a830"/><circle cx="782.5" cy="202.5" r="1.5" fill="#4a6ab0"/><path d="M772 208 Q772 204 774.5 204 Q777 204 777 208Z" fill="#6a8ac8"/><path d="M776 208 Q776 204 778.5 204 Q781 204 781 208Z" fill="#e8c050"/><path d="M780 208 Q780 204 782.5 204 Q785 204 785 208Z" fill="#6a8ac8"/><text x="772" y="215" font-size="7.5" font-weight="bold" textLength="13" lengthAdjust="spacingAndGlyphs" fill="#4a5466">0101</text></svg>
<div class="t" style="left:773px;top:109.03px;font-size:14.5px;color:#3a3a3a;font-weight:normal;transform:scaleX(1.0590);transform-origin:0 0;">Varia</div>
<div class="t" style="left:842.3px;top:109.03px;font-size:14.5px;color:#3a3a3a;font-weight:normal;transform:scaleX(1.0033);transform-origin:0 0;">Break</div>
<div class="t" style="left:910.3px;top:109.03px;font-size:14.5px;color:#3a3a3a;font-weight:normal;transform:scaleX(1.0063);transform-origin:0 0;">Expr</div>
<div class="t" style="left:977px;top:109.03px;font-size:14.5px;color:#3a3a3a;font-weight:normal;transform:scaleX(1.0840);transform-origin:0 0;">Modul</div>
<div class="t" style="left:1049.7px;top:109.03px;font-size:14.5px;color:#3a3a3a;font-weight:normal;transform:scaleX(0.9462);transform-origin:0 0;">Disas</div>
<div class="t" style="left:1206.5px;top:109.03px;font-size:14.5px;color:#3a3a3a;font-weight:normal;transform:scaleX(0.9306);transform-origin:0 0;">Live E</div>
<div class="t" style="left:1273px;top:109.03px;font-size:14.5px;color:#3a3a3a;font-weight:normal;transform:scaleX(0.8552);transform-origin:0 0;">SFRs</div>
<div class="t" style="left:1118.6px;top:109.03px;font-size:14.5px;color:#000;font-weight:normal;transform:scaleX(0.9363);transform-origin:0 0;">Regis</div>
<div class="t" style="left:759.4px;top:173.75px;font-size:14px;color:#9a9a9a;font-weight:bold;transform:scaleX(1.0413);transform-origin:0 0;">Name</div>
<div class="t" style="left:943.7px;top:173.75px;font-size:14px;color:#9a9a9a;font-weight:bold;transform:scaleX(1.0799);transform-origin:0 0;">Value</div>
<div class="t" style="left:1127.8px;top:173.75px;font-size:14px;color:#9a9a9a;font-weight:bold;transform:scaleX(1.0418);transform-origin:0 0;">Description</div>
<div class="t" style="left:789.7px;top:203.03px;font-size:14.5px;color:#000;font-weight:normal;transform:scaleX(0.9953);transform-origin:0 0;">General Registers</div>
<div class="t" style="left:1139.3px;top:203.03px;font-size:14.5px;color:#000;font-weight:normal;transform:scaleX(0.9869);transform-origin:0 0;">General Purpose and FPU Register G</div>
<div class="a" style="left:751px;top:221px;width:183px;height:23px;background:#e95420;"></div>
<div class="a" style="left:935px;top:221px;width:183px;height:23px;background:#e95420;"></div>
<div class="a" style="left:1119px;top:221px;width:261px;height:23px;background:#e95420;"></div>
<div class="t" style="left:807.5px;top:225.73px;font-size:14.5px;color:#fff;font-weight:normal;transform:scaleX(0.9800);transform-origin:0 0;">r0</div>
<div class="t" style="left:955.7px;top:225.9px;font-size:14.3px;color:#fff;font-weight:normal;transform:scaleX(1.0000);transform-origin:0 0;">45</div>
<div class="t" style="left:807.5px;top:248.73px;font-size:14.5px;color:#000;font-weight:normal;transform:scaleX(0.9800);transform-origin:0 0;">r1</div>
<div class="t" style="left:955.7px;top:248.9px;font-size:14.3px;color:#000;font-weight:normal;transform:scaleX(1.0000);transform-origin:0 0;">536870914</div>
<div class="t" style="left:807.5px;top:271.73px;font-size:14.5px;color:#000;font-weight:normal;transform:scaleX(0.9800);transform-origin:0 0;">r2</div>
<div class="t" style="left:955.7px;top:271.9px;font-size:14.3px;color:#000;font-weight:normal;transform:scaleX(1.0000);transform-origin:0 0;">4</div>
<div class="t" style="left:807.5px;top:294.73px;font-size:14.5px;color:#000;font-weight:normal;transform:scaleX(0.9800);transform-origin:0 0;">r3</div>
<div class="t" style="left:955.7px;top:294.9px;font-size:14.3px;color:#000;font-weight:normal;transform:scaleX(1.0000);transform-origin:0 0;">134218217</div>
<div class="t" style="left:807.5px;top:317.73px;font-size:14.5px;color:#000;font-weight:normal;transform:scaleX(0.9800);transform-origin:0 0;">r4</div>
<div class="t" style="left:955.7px;top:317.9px;font-size:14.3px;color:#000;font-weight:normal;transform:scaleX(1.0000);transform-origin:0 0;">536870948</div>
<div class="t" style="left:807.5px;top:340.73px;font-size:14.5px;color:#000;font-weight:normal;transform:scaleX(0.9800);transform-origin:0 0;">r5</div>
<div class="t" style="left:955.7px;top:340.9px;font-size:14.3px;color:#000;font-weight:normal;transform:scaleX(1.0000);transform-origin:0 0;">4</div>
<div class="t" style="left:807.5px;top:363.73px;font-size:14.5px;color:#000;font-weight:normal;transform:scaleX(0.9800);transform-origin:0 0;">r6</div>
<div class="t" style="left:955.7px;top:363.9px;font-size:14.3px;color:#000;font-weight:normal;transform:scaleX(1.0000);transform-origin:0 0;">0</div>
<div class="t" style="left:807.5px;top:386.73px;font-size:14.5px;color:#000;font-weight:normal;transform:scaleX(0.9800);transform-origin:0 0;">r7</div>
<div class="t" style="left:955.7px;top:386.9px;font-size:14.3px;color:#000;font-weight:normal;transform:scaleX(1.0000);transform-origin:0 0;">0</div>
<div class="t" style="left:807.5px;top:409.73px;font-size:14.5px;color:#000;font-weight:normal;transform:scaleX(0.9800);transform-origin:0 0;">r8</div>
<div class="t" style="left:955.7px;top:409.9px;font-size:14.3px;color:#000;font-weight:normal;transform:scaleX(1.0000);transform-origin:0 0;">0</div>
<div class="t" style="left:807.5px;top:432.73px;font-size:14.5px;color:#000;font-weight:normal;transform:scaleX(0.9800);transform-origin:0 0;">r9</div>
<div class="t" style="left:955.7px;top:432.9px;font-size:14.3px;color:#000;font-weight:normal;transform:scaleX(1.0000);transform-origin:0 0;">0</div>
<div class="t" style="left:807.5px;top:455.73px;font-size:14.5px;color:#000;font-weight:normal;transform:scaleX(0.9800);transform-origin:0 0;">r10</div>
<div class="t" style="left:955.7px;top:455.9px;font-size:14.3px;color:#000;font-weight:normal;transform:scaleX(1.0000);transform-origin:0 0;">0</div>
<div class="t" style="left:807.5px;top:478.73px;font-size:14.5px;color:#000;font-weight:normal;transform:scaleX(0.9800);transform-origin:0 0;">r11</div>
<div class="t" style="left:955.7px;top:478.9px;font-size:14.3px;color:#000;font-weight:normal;transform:scaleX(1.0000);transform-origin:0 0;">0</div>
<div class="t" style="left:807.5px;top:501.73px;font-size:14.5px;color:#000;font-weight:normal;transform:scaleX(0.9800);transform-origin:0 0;">r12</div>
<div class="t" style="left:955.7px;top:501.9px;font-size:14.3px;color:#000;font-weight:normal;transform:scaleX(1.0000);transform-origin:0 0;">0</div>
<div class="t" style="left:807.5px;top:524.73px;font-size:14.5px;color:#000;font-weight:normal;transform:scaleX(0.9800);transform-origin:0 0;">sp</div>
<div class="t" style="left:955.7px;top:524.9px;font-size:14.3px;color:#000;font-weight:normal;transform:scaleX(1.0000);transform-origin:0 0;">0x20020000</div>
<div class="a" style="left:751px;top:165px;width:629px;height:371px;overflow:hidden"><svg style="left:-751px;top:-165px" width="1384" height="600"><text x="790" y="230.5" font-size="7.5" font-weight="bold" textLength="14" lengthAdjust="spacingAndGlyphs" fill="#4a5466">1010</text><text x="790" y="236.5" font-size="7.5" font-weight="bold" textLength="14" lengthAdjust="spacingAndGlyphs" fill="#4a5466">0101</text><text x="790" y="253.5" font-size="7.5" font-weight="bold" textLength="14" lengthAdjust="spacingAndGlyphs" fill="#4a5466">1010</text><text x="790" y="259.5" font-size="7.5" font-weight="bold" textLength="14" lengthAdjust="spacingAndGlyphs" fill="#4a5466">0101</text><text x="790" y="276.5" font-size="7.5" font-weight="bold" textLength="14" lengthAdjust="spacingAndGlyphs" fill="#4a5466">1010</text><text x="790" y="282.5" font-size="7.5" font-weight="bold" textLength="14" lengthAdjust="spacingAndGlyphs" fill="#4a5466">0101</text><text x="790" y="299.5" font-size="7.5" font-weight="bold" textLength="14" lengthAdjust="spacingAndGlyphs" fill="#4a5466">1010</text><text x="790" y="305.5" font-size="7.5" font-weight="bold" textLength="14" lengthAdjust="spacingAndGlyphs" fill="#4a5466">0101</text><text x="790" y="322.5" font-size="7.5" font-weight="bold" textLength="14" lengthAdjust="spacingAndGlyphs" fill="#4a5466">1010</text><text x="790" y="328.5" font-size="7.5" font-weight="bold" textLength="14" lengthAdjust="spacingAndGlyphs" fill="#4a5466">0101</text><text x="790" y="345.5" font-size="7.5" font-weight="bold" textLength="14" lengthAdjust="spacingAndGlyphs" fill="#4a5466">1010</text><text x="790" y="351.5" font-size="7.5" font-weight="bold" textLength="14" lengthAdjust="spacingAndGlyphs" fill="#4a5466">0101</text><text x="790" y="368.5" font-size="7.5" font-weight="bold" textLength="14" lengthAdjust="spacingAndGlyphs" fill="#4a5466">1010</text><text x="790" y="374.5" font-size="7.5" font-weight="bold" textLength="14" lengthAdjust="spacingAndGlyphs" fill="#4a5466">0101</text><text x="790" y="391.5" font-size="7.5" font-weight="bold" textLength="14" lengthAdjust="spacingAndGlyphs" fill="#4a5466">1010</text><text x="790" y="397.5" font-size="7.5" font-weight="bold" textLength="14" lengthAdjust="spacingAndGlyphs" fill="#4a5466">0101</text><text x="790" y="414.5" font-size="7.5" font-weight="bold" textLength="14" lengthAdjust="spacingAndGlyphs" fill="#4a5466">1010</text><text x="790" y="420.5" font-size="7.5" font-weight="bold" textLength="14" lengthAdjust="spacingAndGlyphs" fill="#4a5466">0101</text><text x="790" y="437.5" font-size="7.5" font-weight="bold" textLength="14" lengthAdjust="spacingAndGlyphs" fill="#4a5466">1010</text><text x="790" y="443.5" font-size="7.5" font-weight="bold" textLength="14" lengthAdjust="spacingAndGlyphs" fill="#4a5466">0101</text><text x="790" y="460.5" font-size="7.5" font-weight="bold" textLength="14" lengthAdjust="spacingAndGlyphs" fill="#4a5466">1010</text><text x="790" y="466.5" font-size="7.5" font-weight="bold" textLength="14" lengthAdjust="spacingAndGlyphs" fill="#4a5466">0101</text><text x="790" y="483.5" font-size="7.5" font-weight="bold" textLength="14" lengthAdjust="spacingAndGlyphs" fill="#4a5466">1010</text><text x="790" y="489.5" font-size="7.5" font-weight="bold" textLength="14" lengthAdjust="spacingAndGlyphs" fill="#4a5466">0101</text><text x="790" y="506.5" font-size="7.5" font-weight="bold" textLength="14" lengthAdjust="spacingAndGlyphs" fill="#4a5466">1010</text><text x="790" y="512.5" font-size="7.5" font-weight="bold" textLength="14" lengthAdjust="spacingAndGlyphs" fill="#4a5466">0101</text><text x="790" y="529.5" font-size="7.5" font-weight="bold" textLength="14" lengthAdjust="spacingAndGlyphs" fill="#4a5466">1010</text><text x="790" y="535.5" font-size="7.5" font-weight="bold" textLength="14" lengthAdjust="spacingAndGlyphs" fill="#4a5466">0101</text></svg></div>
<div class="a" style="left:751px;top:533px;width:629px;height:1px;background:#dedede;"></div>
<div class="a" style="left:751px;top:534px;width:629px;height:3px;background:#f7f7f7;"></div>
<div class="a" style="left:751px;top:537px;width:629px;height:170px;background:#ffffff;"></div>
<div class="t mono" style="left:753px;top:538.6px;height:17px;line-height:17px;font-size:13.8px;letter-spacing:-0.28px;color:#000">Name : r0</div>
<div class="t mono" style="left:753px;top:555.6px;height:17px;line-height:17px;font-size:13.8px;letter-spacing:-0.28px;color:#000">    Hex:0x2d</div>
<div class="t mono" style="left:753px;top:572.6px;height:17px;line-height:17px;font-size:13.8px;letter-spacing:-0.28px;color:#000">    Decimal:45</div>
<div class="t mono" style="left:753px;top:589.6px;height:17px;line-height:17px;font-size:13.8px;letter-spacing:-0.28px;color:#000">    Octal:055</div>
<div class="t mono" style="left:753px;top:606.6px;height:17px;line-height:17px;font-size:13.8px;letter-spacing:-0.28px;color:#000">    Binary:101101</div>
<div class="t mono" style="left:753px;top:623.6px;height:17px;line-height:17px;font-size:13.8px;letter-spacing:-0.28px;color:#000">    Default:45</div>
<div class="a" style="left:755px;top:703px;width:623px;height:3px;background:#b0b0b0;border-radius:2px"></div>
<div class="a" style="left:1376px;top:542px;width:3px;height:162px;background:#b0b0b0;border-radius:2px"></div>
<div class="a" style="left:64px;top:714px;width:1319px;height:1px;background:#b9b9b9;"></div>
<div class="a" style="left:64px;top:714px;width:1px;height:255px;background:#b9b9b9;"></div>
<div class="a" style="left:1382px;top:714px;width:1px;height:255px;background:#b9b9b9;"></div>
<div class="a" style="left:64px;top:968px;width:1319px;height:1px;background:#b9b9b9;"></div>
<div class="a" style="left:65px;top:715px;width:1317px;height:32px;background:#ececec;"></div>
<div class="a" style="left:503px;top:715px;width:105px;height:33px;background:#ffffff;"></div>
<div class="a" style="left:502px;top:715px;width:1px;height:32px;background:#bdbdbd;"></div>
<div class="a" style="left:608px;top:715px;width:1px;height:32px;background:#bdbdbd;"></div>
<div class="a" style="left:65px;top:747px;width:437px;height:1px;background:#bdbdbd;"></div>
<div class="a" style="left:609px;top:747px;width:773px;height:1px;background:#bdbdbd;"></div>
<div class="a" style="left:1281px;top:715px;width:3px;height:32px;background:#fbfbfb;"></div>
<div class="a" style="left:65px;top:748px;width:1317px;height:220px;background:#ffffff;"></div>
<div class="a" style="left:67px;top:748px;width:358px;height:220px;background:#ffffff;"></div>
<div class="a" style="left:67px;top:782px;width:357px;height:1px;background:#a0a0a0;"></div>
<div class="a" style="left:67px;top:829px;width:357px;height:23px;background:#e95420;"></div>
<div class="a" style="left:428px;top:750px;width:952px;height:218px;background:#ffffff;"></div>
<div class="a" style="left:429px;top:772px;width:951px;height:2px;background:#a8a8a8;"></div>
<div class="a" style="left:429px;top:772px;width:262px;height:1px;background:#d4d4d4;"></div>
<div class="a" style="left:429px;top:773px;width:262px;height:1px;background:#ffffff;"></div>
<div class="a" style="left:1378px;top:751px;width:2px;height:215px;background:#bdbdbd;"></div>
<div class="a" style="left:427px;top:757px;width:2px;height:209px;background:#bdbdbd;"></div>
<div class="a" style="left:429px;top:963px;width:950px;height:1px;background:#e4e4e4;"></div>
<div class="a" style="left:429px;top:964px;width:950px;height:2px;background:#b4b4b4;"></div>
<div class="a" style="left:427px;top:966px;width:953px;height:2px;background:#ffffff;"></div>
<div class="a" style="left:1380px;top:751px;width:2px;height:217px;background:#ffffff;"></div>
<div class="a" style="left:508px;top:776px;width:1px;height:192px;background:#f4f4f4;"></div>
<div class="a" style="left:588px;top:776px;width:1px;height:192px;background:#f4f4f4;"></div>
<div class="a" style="left:668px;top:776px;width:1px;height:192px;background:#f4f4f4;"></div>
<div class="a" style="left:748px;top:776px;width:1px;height:192px;background:#f4f4f4;"></div>
<div class="a" style="left:828px;top:776px;width:1px;height:192px;background:#f4f4f4;"></div>
<div class="a" style="left:429px;top:804px;width:951px;height:1px;background:#f4f4f4;"></div>
<svg style="left:0px;top:0px" width="1384" height="970" viewBox="0 0 1384 970"><rect x="71.5" y="725.5" width="13" height="10" rx="1" fill="#fff" stroke="#2a5aa0" stroke-width="1.2"/><rect x="74" y="728" width="7" height="1.2" fill="#2a5aa0"/><rect x="74" y="730.5" width="6" height="1.2" fill="#2a5aa0"/><rect x="74" y="737" width="8" height="1.5" fill="#2a5aa0"/><rect x="152.5" y="724.5" width="13" height="14" fill="#f4f6fa" stroke="#8a8a9a"/><rect x="159.5" y="725" width="1" height="13" fill="#b0b0c0"/><circle cx="156" cy="728.5" r="2.2" fill="#e02020"/><path d="M153.8 737 L156 732.5 L158.2 737Z" fill="#f0b020"/><path d="M161.5 727.5 L164 727.5 M161.5 730.5 L164 730.5 M161.5 733.5 L164 733.5" stroke="#9090a8" stroke-width=".9"/><defs><radialGradient id="gex" cx=".4" cy=".35" r=".7"><stop offset="0" stop-color="#a8d0f8"/><stop offset="1" stop-color="#3a70c0"/></radialGradient></defs><circle cx="253.8" cy="731.5" r="7" fill="url(#gex)" stroke="#2a5aa0" stroke-width=".8"/><path d="M251.5 727 L257.5 731.5 L251.5 736Z" fill="#fff"/><rect x="358.5" y="724.5" width="12" height="10" rx="1" fill="#fff" stroke="#2a4a80" stroke-width="1.2"/><path d="M361 727.5 L366 727.5 M361 730 L365 730" stroke="#2a4a80"/><path d="M360 737.5 L368 737.5" stroke="#2a4a80" stroke-width="1.5"/><ellipse cx="369.5" cy="736" rx="2.8" ry="3.3" fill="#70c070" stroke="#208040" stroke-width=".8"/><defs><linearGradient id="gc" x1="0" y1="0" x2="1" y2="0"><stop offset="0" stop-color="#7aa0d8"/><stop offset=".45" stop-color="#e8f0fc"/><stop offset="1" stop-color="#6a90c8"/></linearGradient></defs><path d="M511.5 727 Q511.5 725 515.8 725 Q520 725 520 727 L520 737.2 Q520 739 515.8 739 Q511.5 739 511.5 737.2Z" fill="url(#gc)" stroke="#3a60a8" stroke-width=".9"/><path d="M511.8 727.3 Q515.8 729 519.8 727.3" fill="none" stroke="#3a60a8" stroke-width=".6"/><path d="M590.00 729.30 L592.30 727.00 L595.00 729.70 L597.70 727.00 L600.00 729.30 L597.30 732.00 L600.00 734.70 L597.70 737.00 L595.00 734.30 L592.30 737.00 L590.00 734.70 L592.70 732.00Z" fill="#fff" stroke="#111" stroke-width="1.05" stroke-linejoin="round"/><text x="1007" y="732.5" font-size="8.5" font-weight="bold" textLength="15.5" lengthAdjust="spacingAndGlyphs" fill="#1a2a5a">1010</text><path d="M1017 738.5 L1022.5 738.5 L1022.5 733Z" fill="#2a5a9a"/><text x="1034.5" y="732.5" font-size="8.5" font-weight="bold" textLength="15" lengthAdjust="spacingAndGlyphs" fill="#1a2a5a">1010</text><path d="M1034 734 L1039.5 734 L1039.5 739Z" fill="#2a5a9a"/><path d="M1064.5 725.5 L1071 725.5 L1074.5 729 L1074.5 738.5 L1064.5 738.5Z" fill="#eef2fa" stroke="#a89060"/><path d="M1074 723 L1074 730 M1070.5 726.5 L1077.5 726.5" stroke="#f0d050" stroke-width="2"/><path d="M1074 723 L1074 730 M1070.5 726.5 L1077.5 726.5" stroke="#fff8c0" stroke-width=".8"/><rect x="1090.5" y="728.5" width="13" height="10" fill="#eef4fa" stroke="#6a7a90"/><rect x="1091" y="729" width="12" height="2.5" fill="#5a9ae0"/><path d="M1097 735 L1101 730" stroke="#555" stroke-width="1"/><circle cx="1102.5" cy="727.5" r="2.8" fill="#30a040"/><path d="M1099 731 L1104 726" stroke="#208030" stroke-width="2"/><rect x="1116" y="722" width="1" height="22" fill="#c8c8c8"/><rect x="1124.5" y="718.5" width="25" height="25" rx="4" fill="#d6d6d6" stroke="#cccccc"/><path d="M1129.5 730 L1133.5 730 L1133.5 728 L1137.0 731.5 L1133.5 735 L1133.5 733 L1129.5 733Z" fill="#f8e080" stroke="#c09030" stroke-width=".8"/><path d="M1139.0 727 L1139.0 738 M1139.0 732 L1140.5 732 M1139.0 736.5 L1140.5 736.5" stroke="#4a6ab0" stroke-width="1"/><path d="M1137.0 728 L1139.0 725 L1141.0 728Z" fill="#4a6ab0"/><rect x="1141.0" y="730.5" width="3" height="3" fill="#f8c0c8" stroke="#d04050" stroke-width=".8"/><rect x="1141.0" y="735" width="3" height="3" fill="#f8c0c8" stroke="#d04050" stroke-width=".8"/><path d="M1141.5 726.5 L1144.5 726.5" stroke="#6a8ac0" stroke-width=".8"/><rect x="1157" y="722" width="1" height="22" fill="#c8c8c8"/><rect x="1172.5" y="724.5" width="12" height="14" fill="#f4f8fc" stroke="#7a8aa0"/><rect x="1178" y="725" width="1" height="13" fill="#9aaac0"/><circle cx="1175.3" cy="727.8" r="1.4" fill="#30a050"/><circle cx="1175.3" cy="731.5" r="1.4" fill="#30a050"/><circle cx="1175.3" cy="735.2" r="1.4" fill="#30a050"/><path d="M1180 729 L1181.5 726.5 L1183 729Z" fill="#3a8ad0"/><rect x="1180" y="730.3" width="3" height="2.5" fill="#f06070"/><path d="M1180 737 L1181.5 734.5 L1183 737Z" fill="#3a8ad0"/><rect x="1192.5" y="718.5" width="25" height="25" rx="4" fill="#d6d6d6" stroke="#cccccc"/><path d="M1197.5 726.5 L1202 722.5 L1202 725 L1209 725 L1209 728 L1202 728 L1202 730.5Z" fill="#fce8a0" stroke="#c89020" stroke-width="1"/><path d="M1214 735 L1209.5 731 L1209.5 733.5 L1202 733.5 L1202 736.5 L1209.5 736.5 L1209.5 739Z" fill="#fce8a0" stroke="#c89020" stroke-width="1"/><rect x="1226" y="722" width="1" height="22" fill="#c8c8c8"/><rect x="1240" y="724" width="4" height="4" fill="#f0a030"/><rect x="1245" y="724" width="4" height="4" fill="#f8c070"/><rect x="1240" y="729" width="4" height="4" fill="#f0a030"/><rect x="1245.5" y="730.5" width="5" height="8" rx="2" fill="#a8c8e8" stroke="#4a6ab0"/><path d="M1263 729 L1268 734 L1273 729" fill="none" stroke="#333" stroke-width="1.3"/><circle cx="1301" cy="725.5" r="2" fill="none" stroke="#777"/><circle cx="1301" cy="731" r="2" fill="none" stroke="#777"/><circle cx="1301" cy="736.5" r="2" fill="none" stroke="#777"/><rect x="1330.5" y="726.5" width="9" height="3" fill="#fff" stroke="#555" stroke-width="1"/><rect x="1357.5" y="726.5" width="9" height="9" fill="#fff" stroke="#555" stroke-width="1"/><rect x="1358" y="728" width="8" height="1" fill="#555"/><defs><radialGradient id="gd" cx=".5" cy=".45" r=".6"><stop offset="0" stop-color="#d0e2f6"/><stop offset=".4" stop-color="#6e9ad4"/><stop offset="1" stop-color="#2a5aa0"/></radialGradient></defs><path d="M350.5 759.5 L354.5 759.5 L354.5 763.8 L358.7 763.8 L358.7 767.8 L354.5 767.8 L354.5 772 L350.5 772 L350.5 767.8 L346.3 767.8 L346.3 763.8 L350.5 763.8Z" fill="url(#gp)" stroke="#4a9a30" stroke-width=".9"/><path d="M375.5 759.5 L385.5 769.8 M385.5 759.5 L375.5 769.8" stroke="#5a5a5a" stroke-width="3.2" stroke-linecap="round"/><path d="M376 759.8 L380.5 764.3" stroke="#9a9a9a" stroke-width="1"/><path d="M401 758 L408.5 765.5 M408.5 758 L401 765.5" stroke="#b8b8b8" stroke-width="2.8" stroke-linecap="round"/><path d="M405 761.5 L413.5 770.5 M413.5 761.5 L405 770.5" stroke="#606060" stroke-width="3" stroke-linecap="round"/><path d="M95 789 L100 794 L95 799 L90 794Z" fill="url(#gd)" stroke="#3a68a8" stroke-width=".6"/><path d="M92 794 L98 794 M95 791 L95 797" stroke="#dcebfa" stroke-width=".8"/><path d="M95 812 L100 817 L95 822 L90 817Z" fill="url(#gd)" stroke="#3a68a8" stroke-width=".6"/><path d="M92 817 L98 817 M95 814 L95 820" stroke="#dcebfa" stroke-width=".8"/><path d="M95 835 L100 840 L95 845 L90 840Z" fill="url(#gd)" stroke="#3a68a8" stroke-width=".6"/><path d="M92 840 L98 840 M95 837 L95 843" stroke="#dcebfa" stroke-width=".8"/><path d="M95 858 L100 863 L95 868 L90 863Z" fill="url(#gd)" stroke="#3a68a8" stroke-width=".6"/><path d="M92 863 L98 863 M95 860 L95 866" stroke="#dcebfa" stroke-width=".8"/><path d="M650.80 758.10 L653.10 755.80 L656.00 758.70 L658.90 755.80 L661.20 758.10 L658.30 761.00 L661.20 763.90 L658.90 766.20 L656.00 763.30 L653.10 766.20 L650.80 763.90 L653.70 761.00Z" fill="#fff" stroke="#111" stroke-width="1.05" stroke-linejoin="round"/><path d="M428.5 772 L428.5 756 Q428.5 750.5 434 750.5 L1373 750.5 Q1378.5 750.5 1378.5 756 L1378.5 772" fill="none" stroke="#b0b0b0" stroke-width="1"/><path d="M659 750.5 C664 751 667 752 670 756.6 C673 761 676 765 679.3 766.5 C683 769 686 771 691 771.5" fill="none" stroke="#a8a8a8" stroke-width="1"/><path d="M823 750.5 Q829.5 751 829.5 757 L829.5 772" fill="none" stroke="#b0b0b0" stroke-width="1"/><defs><linearGradient id="gp" x1="0" y1="0" x2="0" y2="1"><stop offset="0" stop-color="#e0ec70"/><stop offset="1" stop-color="#70b840"/></linearGradient></defs><path d="M691 755.5 L695.5 755.5 L695.5 759.5 L699.5 759.5 L699.5 764 L695.5 764 L695.5 768 L691 768 L691 764 L687 764 L687 759.5 L691 759.5Z" fill="url(#gp)" stroke="#4a9a30" stroke-width="1"/></svg>
<div class="t" style="left:89.4px;top:724.53px;font-size:14.5px;color:#3a3a3a;font-weight:normal;transform:scaleX(1.0002);transform-origin:0 0;">Console</div>
<div class="t" style="left:172.2px;top:724.53px;font-size:14.5px;color:#3a3a3a;font-weight:normal;transform:scaleX(1.0468);transform-origin:0 0;">Problems</div>
<div class="t" style="left:266.3px;top:724.53px;font-size:14.5px;color:#3a3a3a;font-weight:normal;transform:scaleX(1.0103);transform-origin:0 0;">Executables</div>
<div class="t" style="left:376.6px;top:724.53px;font-size:14.5px;color:#3a3a3a;font-weight:normal;transform:scaleX(0.9984);transform-origin:0 0;">Debugger Console</div>
<div class="t" style="left:527.6px;top:724.53px;font-size:14.5px;color:#000;font-weight:normal;transform:scaleX(1.0543);transform-origin:0 0;">Memory</div>
<div class="t" style="left:67.8px;top:751.53px;font-size:14.5px;color:#3a3a3a;font-weight:normal;transform:scaleX(1.0883);transform-origin:0 0;">Monitors</div>
<div class="t" style="left:108.5px;top:787.73px;font-size:14.5px;color:#000;font-weight:normal;transform:scaleX(0.9785);transform-origin:0 0;">0x20000000</div>
<div class="t" style="left:108.5px;top:810.73px;font-size:14.5px;color:#000;font-weight:normal;transform:scaleX(0.9785);transform-origin:0 0;">0x20000002</div>
<div class="t" style="left:108.5px;top:833.73px;font-size:14.5px;color:#fff;font-weight:normal;transform:scaleX(0.9785);transform-origin:0 0;">0x20000001</div>
<div class="t" style="left:108.5px;top:856.73px;font-size:14.5px;color:#000;font-weight:normal;transform:scaleX(0.9785);transform-origin:0 0;">0x20000018</div>
<div class="t" style="left:431.5px;top:754.23px;font-size:14.5px;color:#000;font-weight:normal;transform:scaleX(0.9676);transform-origin:0 0;">0x20000001 : 0x20000001 &lt;Hex&gt;</div>
<div class="t" style="left:706.9px;top:754.43px;font-size:14.5px;color:#3a3a3a;font-weight:normal;transform:scaleX(0.9894);transform-origin:0 0;">New Renderings...</div>
<div class="t mono" style="left:437px;top:780.6px;height:17px;line-height:17px;font-size:13.8px;letter-spacing:-0.28px;color:#a8a8a8">Address</div>
<div class="t mono" style="left:517px;top:780.6px;height:17px;line-height:17px;font-size:13.8px;letter-spacing:-0.28px;color:#a8a8a8">0 - 3</div>
<div class="t mono" style="left:597px;top:780.6px;height:17px;line-height:17px;font-size:13.8px;letter-spacing:-0.28px;color:#a8a8a8">4 - 7</div>
<div class="t mono" style="left:677px;top:780.6px;height:17px;line-height:17px;font-size:13.8px;letter-spacing:-0.28px;color:#a8a8a8">8 - B</div>
<div class="t mono" style="left:757px;top:780.6px;height:17px;line-height:17px;font-size:13.8px;letter-spacing:-0.28px;color:#a8a8a8">C - F</div>
<div class="a" style="left:511px;top:807px;width:77px;height:21px;background:#e95420;"></div>
<div class="t mono" style="left:441px;top:809.6px;height:17px;line-height:17px;font-size:13.8px;letter-spacing:-0.28px;color:#000">20000000</div>
<div class="t mono" style="left:525px;top:809.6px;height:17px;line-height:17px;font-size:13.8px;letter-spacing:-0.28px;color:#fff">0100010C</div>
<div class="t mono" style="left:601px;top:809.6px;height:17px;line-height:17px;font-size:13.8px;letter-spacing:-0.28px;color:#000">1C040300</div>
<div class="t mono" style="left:681px;top:809.6px;height:17px;line-height:17px;font-size:13.8px;letter-spacing:-0.28px;color:#000">00000000</div>
<div class="t mono" style="left:761px;top:809.6px;height:17px;line-height:17px;font-size:13.8px;letter-spacing:-0.28px;color:#000">00000000</div>
<div class="t mono" style="left:441px;top:832.6px;height:17px;line-height:17px;font-size:13.8px;letter-spacing:-0.28px;color:#000">20000010</div>
<div class="t mono" style="left:521px;top:832.6px;height:17px;line-height:17px;font-size:13.8px;letter-spacing:-0.28px;color:#000">00000000</div>
<div class="t mono" style="left:601px;top:832.6px;height:17px;line-height:17px;font-size:13.8px;letter-spacing:-0.28px;color:#000">00000000</div>
<div class="t mono" style="left:681px;top:832.6px;height:17px;line-height:17px;font-size:13.8px;letter-spacing:-0.28px;color:#000">00000000</div>
<div class="t mono" style="left:761px;top:832.6px;height:17px;line-height:17px;font-size:13.8px;letter-spacing:-0.28px;color:#000">00000000</div>
<div class="t mono" style="left:441px;top:855.6px;height:17px;line-height:17px;font-size:13.8px;letter-spacing:-0.28px;color:#000">20000020</div>
<div class="t mono" style="left:521px;top:855.6px;height:17px;line-height:17px;font-size:13.8px;letter-spacing:-0.28px;color:#000">00000000</div>
<div class="t mono" style="left:601px;top:855.6px;height:17px;line-height:17px;font-size:13.8px;letter-spacing:-0.28px;color:#000">06214160</div>
<div class="t mono" style="left:681px;top:855.6px;height:17px;line-height:17px;font-size:13.8px;letter-spacing:-0.28px;color:#000">40F6FF71</div>
<div class="t mono" style="left:761px;top:855.6px;height:17px;line-height:17px;font-size:13.8px;letter-spacing:-0.28px;color:#000">81600120</div>
<div class="t mono" style="left:441px;top:878.6px;height:17px;line-height:17px;font-size:13.8px;letter-spacing:-0.28px;color:#000">20000030</div>
<div class="t mono" style="left:521px;top:878.6px;height:17px;line-height:17px;font-size:13.8px;letter-spacing:-0.28px;color:#000">02BD2DE9</div>
<div class="t mono" style="left:601px;top:878.6px;height:17px;line-height:17px;font-size:13.8px;letter-spacing:-0.28px;color:#000">F0418046</div>
<div class="t mono" style="left:681px;top:878.6px;height:17px;line-height:17px;font-size:13.8px;letter-spacing:-0.28px;color:#000">0D461646</div>
<div class="t mono" style="left:761px;top:878.6px;height:17px;line-height:17px;font-size:13.8px;letter-spacing:-0.28px;color:#000">1F460024</div>
<div class="t mono" style="left:441px;top:901.6px;height:17px;line-height:17px;font-size:13.8px;letter-spacing:-0.28px;color:#000">20000040</div>
<div class="t mono" style="left:521px;top:901.6px;height:17px;line-height:17px;font-size:13.8px;letter-spacing:-0.28px;color:#000">37B1022F</div>
<div class="t mono" style="left:601px;top:901.6px;height:17px;line-height:17px;font-size:13.8px;letter-spacing:-0.28px;color:#000">08D005D3</div>
<div class="t mono" style="left:681px;top:901.6px;height:17px;line-height:17px;font-size:13.8px;letter-spacing:-0.28px;color:#000">032F08BF</div>
<div class="t mono" style="left:761px;top:901.6px;height:17px;line-height:17px;font-size:13.8px;letter-spacing:-0.28px;color:#000">082408E0</div>
<div class="t mono" style="left:441px;top:924.6px;height:17px;line-height:17px;font-size:13.8px;letter-spacing:-0.28px;color:#000">20000050</div>
<div class="t mono" style="left:521px;top:924.6px;height:17px;line-height:17px;font-size:13.8px;letter-spacing:-0.28px;color:#000">012406E0</div>
<div class="t mono" style="left:601px;top:924.6px;height:17px;line-height:17px;font-size:13.8px;letter-spacing:-0.28px;color:#000">022404E0</div>
<div class="t mono" style="left:681px;top:924.6px;height:17px;line-height:17px;font-size:13.8px;letter-spacing:-0.28px;color:#000">042402E0</div>
<div class="t mono" style="left:761px;top:924.6px;height:17px;line-height:17px;font-size:13.8px;letter-spacing:-0.28px;color:#000">A6192D1B</div>
<div class="t mono" style="left:441px;top:947.6px;height:17px;line-height:17px;font-size:13.8px;letter-spacing:-0.28px;color:#000">20000060</div>
<div class="t mono" style="left:521px;top:947.6px;height:17px;line-height:17px;font-size:13.8px;letter-spacing:-0.28px;color:#000">A044FDB1</div>
<div class="t mono" style="left:601px;top:947.6px;height:17px;line-height:17px;font-size:13.8px;letter-spacing:-0.28px;color:#000">57B1022F</div>
<div class="t mono" style="left:681px;top:947.6px;height:17px;line-height:17px;font-size:13.8px;letter-spacing:-0.28px;color:#000">12D00CD3</div>
<div class="t mono" style="left:761px;top:947.6px;height:17px;line-height:17px;font-size:13.8px;letter-spacing:-0.28px;color:#000">032F02BF</div>
<div class="a" style="left:429px;top:963px;width:950px;height:1px;background:#e4e4e4;"></div>
<div class="a" style="left:429px;top:964px;width:950px;height:2px;background:#b4b4b4;"></div>
<div class="a" style="left:427px;top:966px;width:953px;height:2px;background:#ffffff;"></div>
<div class="a" style="left:1380px;top:751px;width:2px;height:217px;background:#ffffff;"></div>
</body></html>
